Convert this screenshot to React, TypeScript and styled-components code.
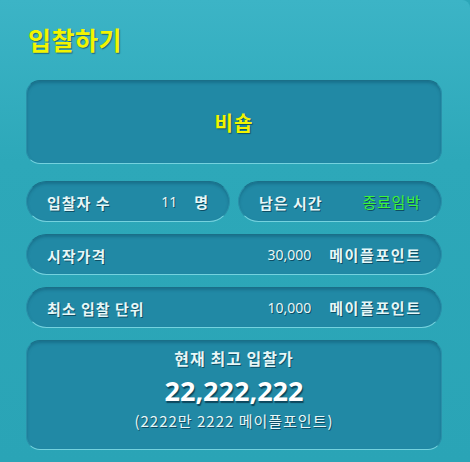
import React from 'react';
import styled, { createGlobalStyle } from 'styled-components';

const GlobalStyle = createGlobalStyle`
  * {
    box-sizing: border-box;
  }
  body {
    margin: 0;
    background: #2ca6b8;
    font-family: 'Noto Sans CJK KR', 'Noto Sans', sans-serif;
  }
`;

const Page = styled.div`
  width: 470px;
  height: 462px;
  padding: 0 28px 0 26px;
  display: flex;
  flex-direction: column;
  background: linear-gradient(180deg, #3cb4c6 0%, #2da8b9 35%, #2aa4b6 100%);
  border-radius: 0 8px 0 0;
  overflow: hidden;
`;

const Title = styled.h1`
  margin: 0;
  height: 80px;
  padding: 21px 0 0 2px;
  font-size: 25px;
  font-weight: 700;
  line-height: 36px;
  letter-spacing: 0.5px;
  color: #f2f500;
  text-shadow: 1px 1px 1px #1b6478;
`;

const Inset = styled.div<{ $round?: boolean }>`
  background: #2189a5;
  border: 1px solid #2a8fa8;
  border-top-color: #1a6f88;
  border-bottom-color: #74d2de;
  border-radius: ${(p) => (p.$round ? '21px' : '14px')};
  box-shadow: inset 0 2px 3px rgba(10, 70, 95, 0.35);
`;

const ItemBox = styled(Inset)`
  height: 84px;
  flex-shrink: 0;
  display: flex;
  align-items: center;
  justify-content: center;
  font-size: 20px;
  font-weight: 700;
  letter-spacing: 1px;
  color: #f2f500;
  text-shadow: 1px 1px 1px #0e5468;
`;

const Row = styled.div`
  display: flex;
  gap: 8px;
  margin-top: 17px;

  & > * {
    flex: 1;
  }
`;

const Pill = styled(Inset)<{ $top?: number }>`
  height: 41px;
  flex-shrink: 0;
  margin-top: ${(p) => p.$top ?? 0}px;
  padding: 0 21px 0 20px;
  display: flex;
  align-items: center;
  color: #e6f7f8;
  text-shadow: 1px 1px 0 rgba(8, 60, 80, 0.75);
`;

const Label = styled.span`
  font-size: 15px;
  font-weight: 700;
  letter-spacing: 1px;
  flex: 1;
  padding-top: 1px;
`;

const Value = styled.span`
  font-size: 14px;
  font-weight: 400;
  font-family: 'Noto Sans', 'Noto Sans CJK KR', sans-serif;
`;

const Unit = styled.span<{ $gap: number }>`
  font-size: 15px;
  font-weight: 700;
  letter-spacing: 1.6px;
  margin-left: ${(p) => p.$gap}px;
  margin-right: -1.6px;
`;

const Urgent = styled.span`
  font-size: 15px;
  font-weight: 400;
  color: #3cf53a;
  letter-spacing: 0.8px;
  margin-right: -0.8px;
`;

const BidBox = styled(Inset)`
  height: 110px;
  flex-shrink: 0;
  margin-top: 12px;
  display: flex;
  flex-direction: column;
  align-items: center;
  padding-top: 5px;
  color: #e6f7f8;
  text-shadow: 1px 1px 0 rgba(8, 60, 80, 0.75);
`;

const BidLabel = styled.div`
  font-size: 16px;
  font-weight: 700;
  letter-spacing: 1px;
  line-height: 24px;
`;

const BidAmount = styled.div`
  font-size: 27px;
  font-weight: 700;
  line-height: 38px;
  margin-top: 2px;
  font-family: 'Noto Sans', 'Noto Sans CJK KR', sans-serif;
  color: #ffffff;
  text-shadow: 1px 2px 1px rgba(8, 55, 75, 0.8);
`;

const BidNote = styled.div`
  font-size: 15px;
  font-weight: 400;
  letter-spacing: 1px;
  line-height: 22px;
`;

export default function App() {
  return (
    <>
      <GlobalStyle />
      <Page>
        <Title>입찰하기</Title>
        <ItemBox>비숍</ItemBox>
        <Row>
          <Pill $round>
            <Label>입찰자 수</Label>
            <Value>11</Value>
            <Unit $gap={17}>명</Unit>
          </Pill>
          <Pill $round>
            <Label>남은 시간</Label>
            <Urgent>종료임박</Urgent>
          </Pill>
        </Row>
        <Pill $round $top={12}>
          <Label>시작가격</Label>
          <Value>30,000</Value>
          <Unit $gap={18}>메이플포인트</Unit>
        </Pill>
        <Pill $round $top={12}>
          <Label>최소 입찰 단위</Label>
          <Value>10,000</Value>
          <Unit $gap={18}>메이플포인트</Unit>
        </Pill>
        <BidBox>
          <BidLabel>현재 최고 입찰가</BidLabel>
          <BidAmount>22,222,222</BidAmount>
          <BidNote>(2222만 2222 메이플포인트)</BidNote>
        </BidBox>
      </Page>
    </>
  );
}
